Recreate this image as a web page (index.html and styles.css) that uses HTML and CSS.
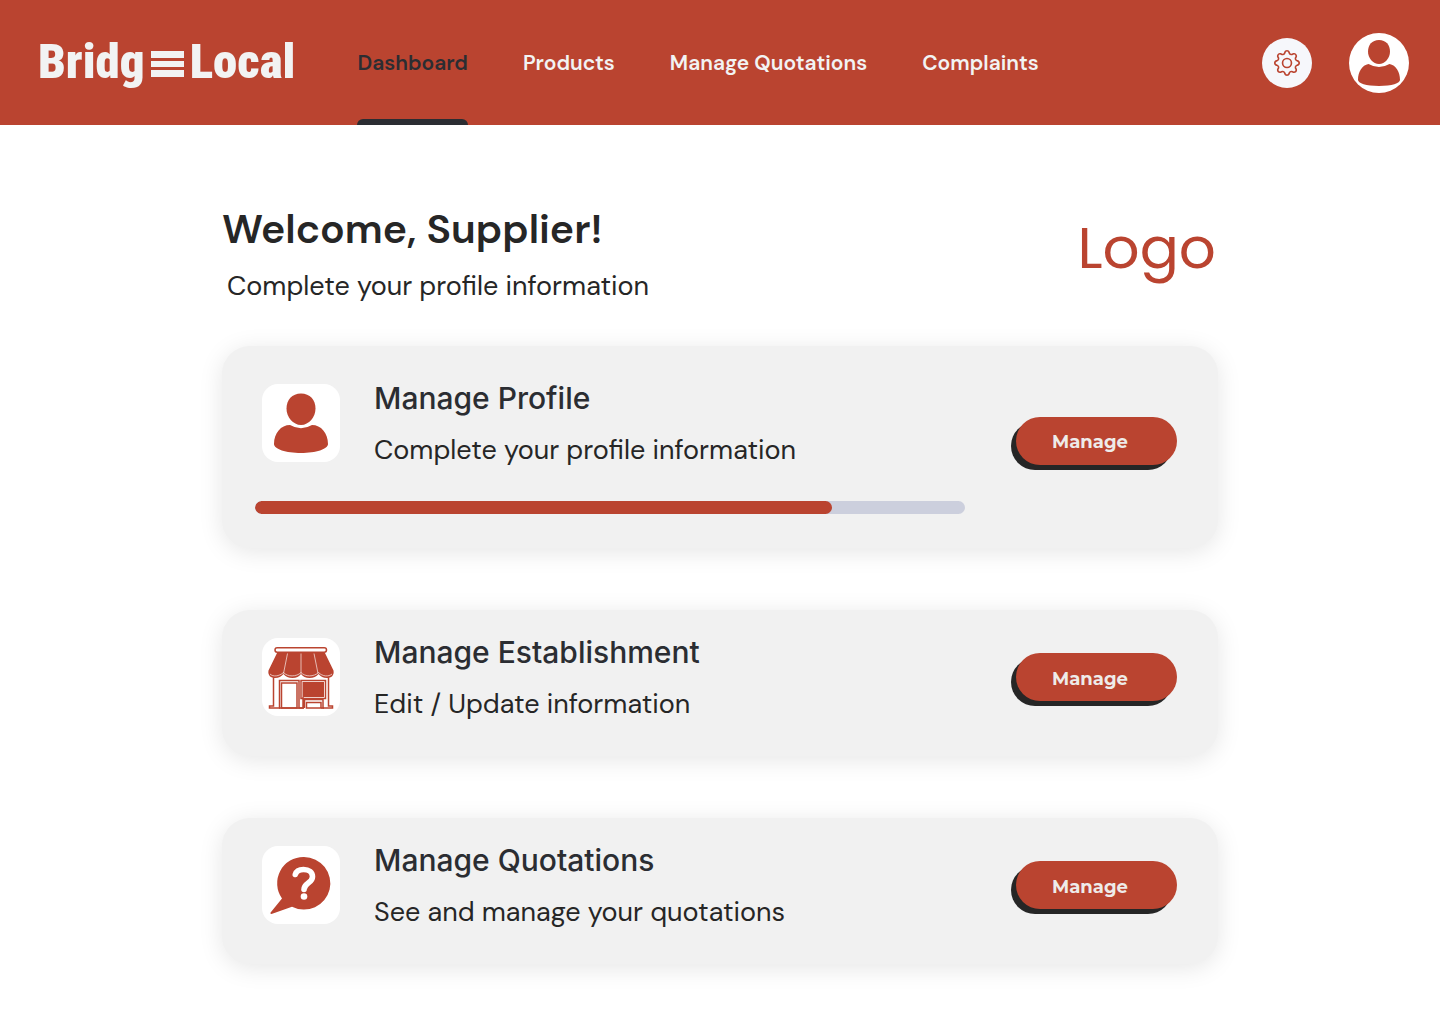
FILE: index.html
```html
<!DOCTYPE html>
<html lang="en">
<head>
<meta charset="utf-8">
<meta name="viewport" content="width=device-width, initial-scale=1">
<title>BridgeLocal – Supplier dashboard</title>
<link rel="stylesheet" href="styles.css">
</head>
<body>
<header class="topbar">
  <a class="brand" href="#" aria-label="BridgeLocal">
    <span>Bridg</span>
    <svg class="brand-bars" viewBox="0 0 33 32" aria-hidden="true"><path d="M0 5h33v7H0zM0 15h33v6H0zM0 24h33v7H0z" fill="currentColor"/></svg>
    <span>Local</span>
  </a>
  <nav class="nav" aria-label="Main">
    <a class="nav-link active" href="#" aria-current="page">Dashboard</a>
    <a class="nav-link" href="#">Products</a>
    <a class="nav-link" href="#">Manage Quotations</a>
    <a class="nav-link" href="#">Complaints</a>
  </nav>
  <div class="actions">
    <button class="round settings" type="button" aria-label="Settings">
      <svg viewBox="0 0 16 16" width="26" height="26" fill="currentColor" aria-hidden="true">
        <path d="M8 4.754a3.246 3.246 0 1 0 0 6.492 3.246 3.246 0 0 0 0-6.492zM5.754 8a2.246 2.246 0 1 1 4.492 0 2.246 2.246 0 0 1-4.492 0z"/>
        <path d="M9.796 1.343c-.527-1.79-3.065-1.79-3.592 0l-.094.319a.873.873 0 0 1-1.255.52l-.292-.16c-1.64-.892-3.433.902-2.54 2.541l.159.292a.873.873 0 0 1-.52 1.255l-.319.094c-1.79.527-1.79 3.065 0 3.592l.319.094a.873.873 0 0 1 .52 1.255l-.16.292c-.892 1.64.901 3.434 2.541 2.54l.292-.159a.873.873 0 0 1 1.255.52l.094.319c.527 1.79 3.065 1.79 3.592 0l.094-.319a.873.873 0 0 1 1.255-.52l.292.16c1.64.893 3.434-.902 2.54-2.541l-.159-.292a.873.873 0 0 1 .52-1.255l.319-.094c1.79-.527 1.79-3.065 0-3.592l-.319-.094a.873.873 0 0 1-.52-1.255l.16-.292c.893-1.64-.902-3.433-2.541-2.54l-.292.159a.873.873 0 0 1-1.255-.52l-.094-.319zm-2.633.283c.246-.835 1.428-.835 1.674 0l.094.319a1.873 1.873 0 0 0 2.693 1.115l.291-.16c.764-.415 1.6.42 1.184 1.185l-.159.292a1.873 1.873 0 0 0 1.116 2.692l.318.094c.835.246.835 1.428 0 1.674l-.319.094a1.873 1.873 0 0 0-1.115 2.693l.16.291c.415.764-.42 1.6-1.185 1.184l-.291-.159a1.873 1.873 0 0 0-2.693 1.116l-.094.318c-.246.835-1.428.835-1.674 0l-.094-.319a1.873 1.873 0 0 0-2.692-1.115l-.292.16c-.764.415-1.6-.42-1.184-1.185l.159-.291A1.873 1.873 0 0 0 1.945 8.93l-.319-.094c-.835-.246-.835-1.428 0-1.674l.319-.094A1.873 1.873 0 0 0 3.06 4.377l-.16-.292c-.415-.764.42-1.6 1.185-1.184l.292.159a1.873 1.873 0 0 0 2.692-1.115l.094-.319z"/>
      </svg>
    </button>
    <button class="round account" type="button" aria-label="Account">
      <svg viewBox="0 0 60 60" width="60" height="60" fill="currentColor" aria-hidden="true">
        <path d="M30 7c7 0 11 5 11 11.500C41 25 36 31 30 31S19 25 19 18.500C19 12 23 7 30 7z"/>
        <path d="M19.500 31q10.500 6 21 0C47 32 51 39 51 47c0 3-8 6-21 6S9 50 9 47c0-8 4-15 10.500-16z"/>
      </svg>
    </button>
  </div>
</header>

<main class="page">
  <section class="intro">
    <div>
      <h1 class="intro-title">Welcome, Supplier!</h1>
      <p class="intro-text">Complete your profile information</p>
    </div>
    <span class="company-logo">Logo</span>
  </section>

  <section class="card card-progress">
    <div class="card-info">
      <div class="summary">
        <svg class="tile" viewBox="0 0 78 78" aria-hidden="true">
          <path d="M39 9.500c9 0 14.500 6.500 14.500 15C53.500 33 47 41 39 41S24.500 33 24.500 24.500C24.500 16 30 9.500 39 9.500z"/>
          <path d="M28 41q11 6.500 22 0c9 0 16 8 16 19 0 5-12 9-27 9s-27-4-27-9c0-11 7-19 16-19z"/>
        </svg>
        <div class="summary-text">
          <h2 class="card-title">Manage Profile</h2>
          <p class="card-text">Complete your profile information</p>
        </div>
      </div>
      <progress class="meter" max="710" value="577" aria-label="Profile completion"></progress>
    </div>
    <button class="pill" type="button">Manage</button>
  </section>

  <section class="card">
    <div class="card-info">
      <div class="summary">
        <svg class="tile" viewBox="0 0 78 78" aria-hidden="true">
          <rect x="13" y="9.800" width="51.500" height="4.400" rx="2.200" fill="none" stroke="currentColor" stroke-width="1.500"/>
          <path d="M15 15h48l8.500 17.500c1 5-2.500 7.500-6.500 7.500-4 0-6-1.500-8.500-4-2 2.500-5 4-9 4s-6.500-1.500-8.500-4c-2 2.500-4.500 4-8.500 4s-7-1.500-9-4c-2.500 2.500-4.500 4-8.500 4s-7.500-2.500-6.500-7.500z"/>
          <path d="M25.500 15.500L21.500 35.500M39 15.500v20M52 15.500l4 20" fill="none" stroke="#fff" stroke-width=".8" opacity=".8"/>
          <path d="M8 36c3 3 9 2.500 13.500-1.500 4 4.500 13 4.500 17.500 0 4 4.500 13 4.500 17.500 0 4 4 10 4.500 13.500 1.500" fill="none" stroke="#fff" stroke-width=".8" opacity=".8"/>
          <g fill="none" stroke="currentColor" stroke-width="1.500">
            <path d="M11.500 39.500v28.500H7.500v2h10V42.500h19.500v27.500h4V59M66.500 39.500v28.500h4v2H61v-8.500H42.500V70"/>
            <path d="M19.500 70V45h15.500v25z"/>
            <path d="M44.500 70v-5.500h14.500V70z"/>
            <path d="M39 42.500h24.500v18H39zM17 70h25M59 70h3"/>
          </g>
          <rect x="40.500" y="44" width="21.500" height="15"/>
        </svg>
        <div class="summary-text">
          <h2 class="card-title">Manage Establishment</h2>
          <p class="card-text">Edit / Update information</p>
        </div>
      </div>
    </div>
    <button class="pill" type="button">Manage</button>
  </section>

  <section class="card">
    <div class="card-info">
      <div class="summary">
        <svg class="tile" viewBox="0 0 78 78" aria-hidden="true">
          <path d="M42 11a26.300 26.300 0 1 1-12 49.700L9.500 68q-2-.3-.5-2l11-13.500A26.300 26.300 0 0 1 42 11z"/>
          <path d="M33.300 28.500c1-3.500 4.200-5 8.200-5 5.500 0 9 2.800 9 7.200 0 6.500-8.500 6.300-8.500 12.800" fill="none" stroke="#fff" stroke-width="5.600" stroke-linecap="round"/>
          <circle cx="42" cy="50.500" r="3.300" fill="#fff"/>
        </svg>
        <div class="summary-text">
          <h2 class="card-title">Manage Quotations</h2>
          <p class="card-text">See and manage your quotations</p>
        </div>
      </div>
    </div>
    <button class="pill" type="button">Manage</button>
  </section>
</main>
</body>
</html>
```
FILE: styles.css
```css
:root {
  --brand: #ba4430;
  --ink: #262626;
  --slate: #2b2d32;
  --panel: #f1f1f1;
}

* {
  box-sizing: border-box;
}

body {
  margin: 0;
  background: #fff;
  color: var(--ink);
  font-family: "DM Sans", Inter, sans-serif;
}

h1,
h2,
p {
  margin: 0;
}

button {
  border: 0;
  padding: 0;
  font: inherit;
  cursor: pointer;
}

.topbar {
  display: flex;
  align-items: center;
  min-height: 125px;
  padding: 0 31px 0 38px;
  background: var(--brand);
  color: #f2f3f3;
}

.brand {
  display: flex;
  align-items: center;
  gap: 6px;
  padding-bottom: 2px;
  color: inherit;
  font: 900 49px/60px "Roboto Condensed", "Archivo Narrow", Roboto, sans-serif;
  text-decoration: none;
}

.brand-bars {
  width: 33px;
  height: 32px;
}

.nav {
  display: flex;
  align-self: stretch;
  gap: 55px;
  margin-left: 62px;
}

.nav-link {
  position: relative;
  display: flex;
  align-items: center;
  color: inherit;
  font-size: 21px;
  font-weight: 600;
  text-decoration: none;
  white-space: nowrap;
}

.nav-link.active {
  color: var(--slate);
}

.nav-link.active::after {
  content: "";
  position: absolute;
  inset: auto 0 0;
  height: 6px;
  border-radius: 6px 6px 0 0;
  background: var(--slate);
}

.actions {
  display: flex;
  align-items: center;
  gap: 37px;
  margin-left: auto;
}

.round {
  display: grid;
  place-items: center;
  border-radius: 50%;
  color: var(--brand);
}

.settings {
  width: 50px;
  height: 50px;
  background: #f6f7fb;
}

.account {
  width: 60px;
  height: 60px;
  background: #fff;
}

.page {
  max-width: 1036px;
  margin: 0 auto;
  padding: 80px 20px 60px;
}

.intro {
  display: flex;
  justify-content: space-between;
  margin-bottom: 42px;
}

.intro-title {
  font-size: 41px;
  font-weight: 600;
  line-height: 48px;
}

.intro-text {
  margin-top: 15px;
  padding-left: 5px;
  font-size: 27px;
  line-height: 36px;
}

.company-logo {
  padding: 8px 2px 0 0;
  color: var(--brand);
  font-family: Poppins, Inter, sans-serif;
  font-size: 58px;
  line-height: 70px;
}

.card {
  display: grid;
  grid-template-columns: 1fr auto;
  align-items: center;
  gap: 51px;
  margin-bottom: 62px;
  padding: 23px 41px 35px 33px;
  border-radius: 28px;
  background: var(--panel);
  box-shadow: 0 4px 24px rgb(0 0 0 / 10%);
}

.card:last-child {
  margin-bottom: 0;
}

.card-progress {
  padding-top: 33px;
  padding-bottom: 34px;
}

.card-progress .pill {
  margin-bottom: 12px;
}

.summary {
  display: flex;
  align-items: center;
  gap: 34px;
  padding-left: 7px;
}

.tile {
  flex: none;
  width: 78px;
  height: 78px;
  border-radius: 16px;
  background: #fff;
  color: var(--brand);
  fill: currentColor;
}

.card-title {
  color: var(--slate);
  font: 500 30px/38px Inter, sans-serif;
}

.card-text {
  margin-top: 16px;
  font-size: 27px;
  line-height: 34px;
}

.meter {
  display: block;
  width: 100%;
  height: 13px;
  margin-top: 34px;
  border: 0;
  border-radius: 7px;
  overflow: hidden;
  background: #cccfdd;
  appearance: none;
}

.meter::-webkit-progress-bar {
  background: #cccfdd;
}

.meter::-webkit-progress-value {
  border-radius: 7px;
  background: var(--brand);
}

.meter::-moz-progress-bar {
  border-radius: 7px;
  background: var(--brand);
}

.pill {
  width: 161px;
  height: 48px;
  padding: 3px 13px 0 0;
  border-radius: 24px;
  background: var(--brand);
  box-shadow: -5px 5px 0 var(--ink);
  color: #eeebe9;
  font-family: Montserrat, Inter, sans-serif;
  font-size: 18px;
  font-weight: 700;
}
```
